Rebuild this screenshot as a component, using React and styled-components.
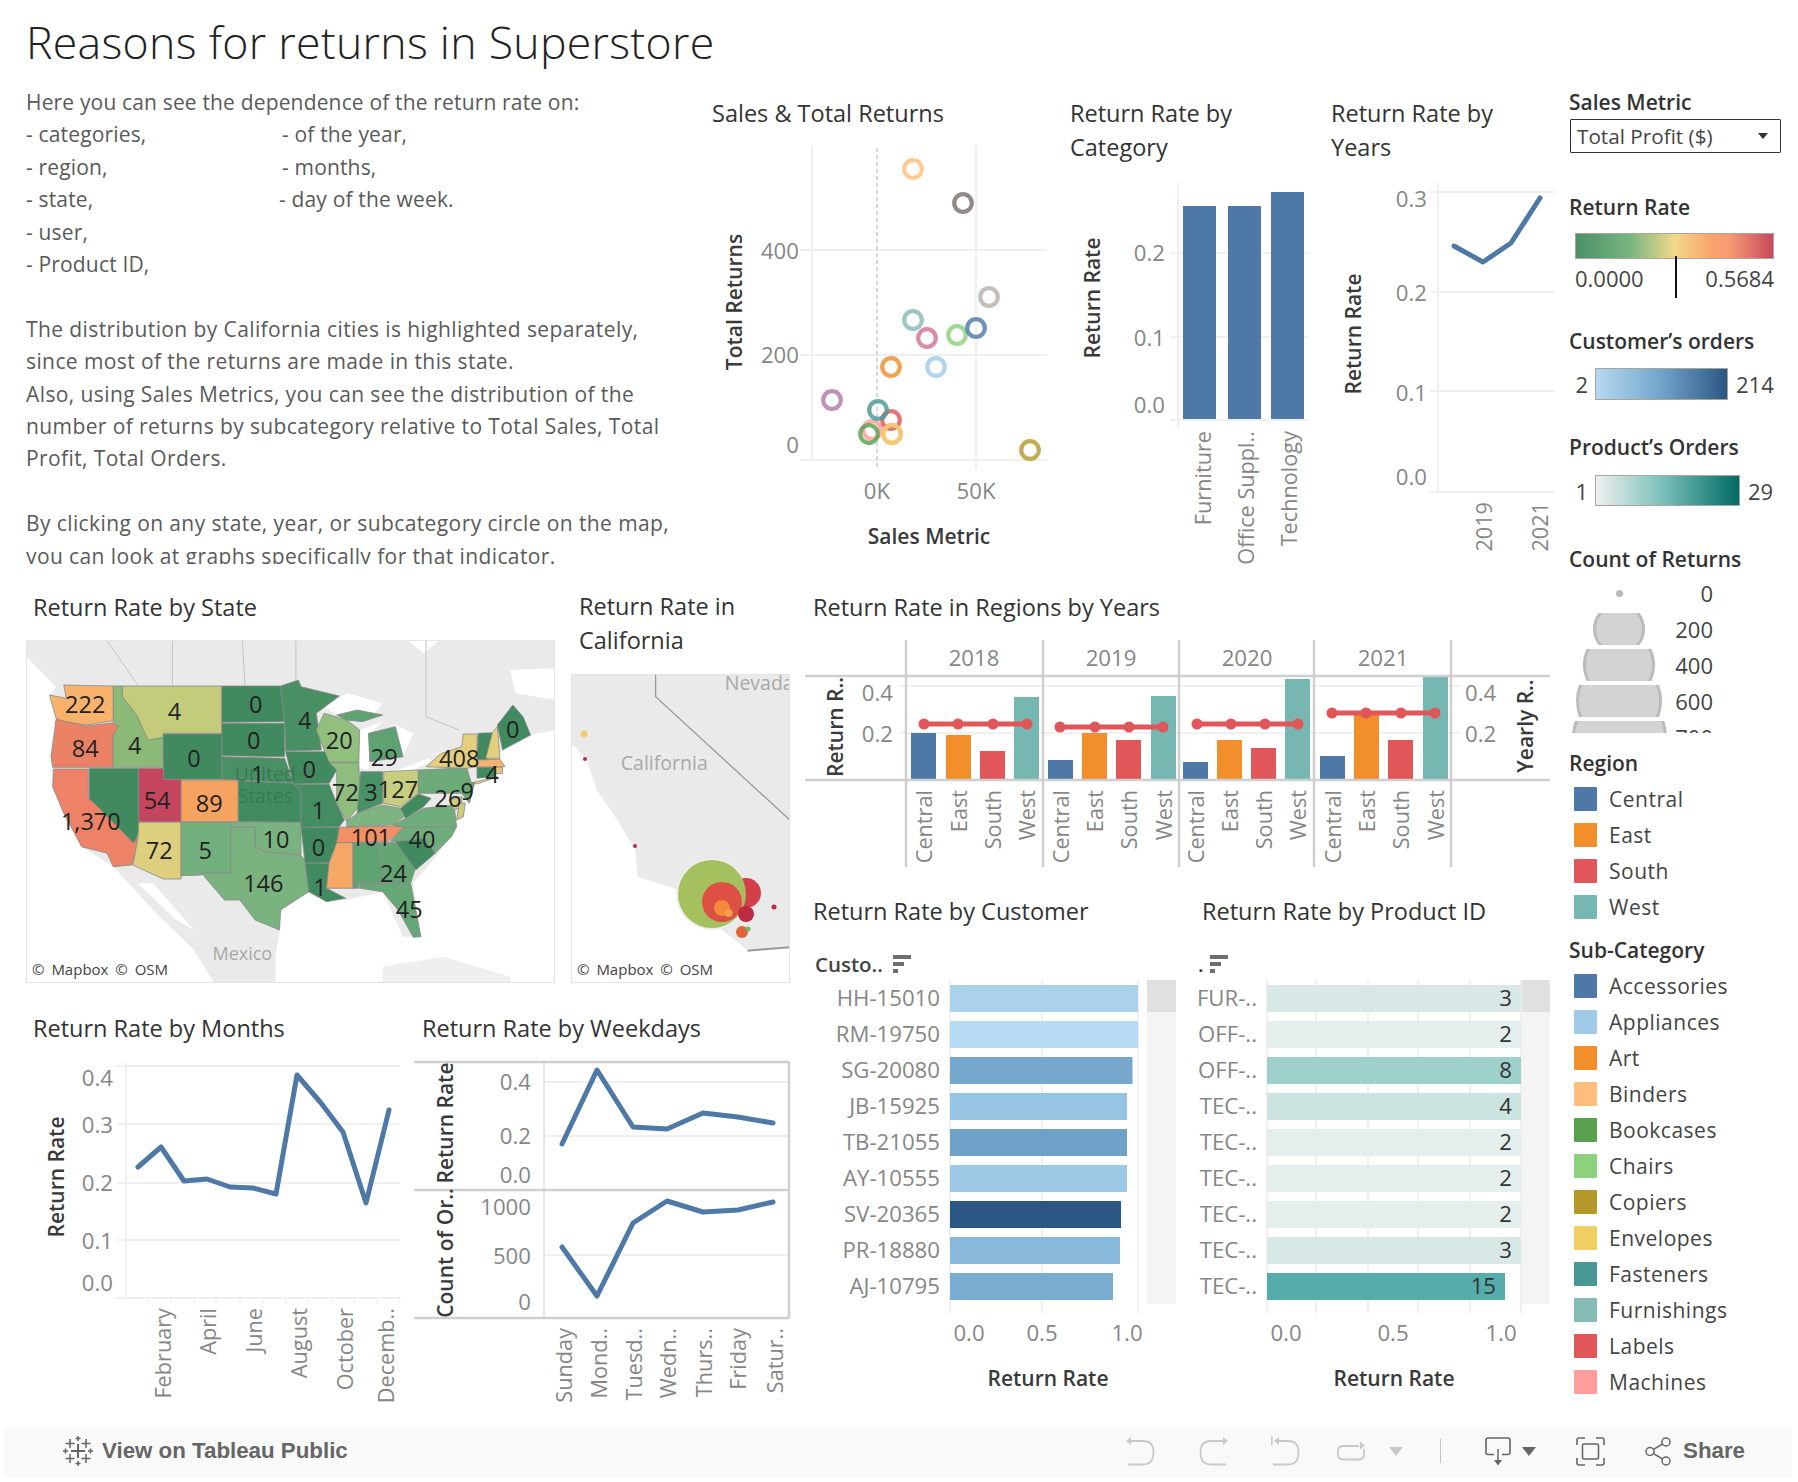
import React from "react";
import styled, { createGlobalStyle } from "styled-components";

const Global = createGlobalStyle`
  html, body { margin: 0; padding: 0; background: #fff; }
  body { font-family: "Open Sans", "Noto Sans", sans-serif; color: #333; }
`;

const Page = styled.div`
  width: 1798px;
  height: 1482px;
  display: flex;
  flex-direction: column;
  overflow: hidden;
`;

const Header = styled.h1`
  margin: 0;
  height: 86px;
  padding: 16px 0 0 26px;
  box-sizing: border-box;
  font-size: 44.6px;
  line-height: 52px;
  font-weight: 300;
  letter-spacing: 0.3px;
  color: #222;
  white-space: nowrap;
`;

const Main = styled.div`
  display: flex;
  height: 1342px;
`;

const Content = styled.div`
  width: 1560px;
  display: flex;
  flex-direction: column;
`;

const TopRow = styled.div`
  display: flex;
  height: 504px;
`;

const BottomRow = styled.div`
  display: flex;
  height: 838px;
`;

const Stack = styled.div`
  width: ${(p) => p.$w}px;
  display: flex;
  flex-direction: column;
`;

const Row = styled.div`
  display: flex;
  height: ${(p) => p.$h}px;
`;

const Intro = styled.div`
  width: 700px;
  height: 478px;
  padding-left: 26px;
  box-sizing: border-box;
  overflow: hidden;
  font-size: 21px;
  line-height: 32.4px;
  letter-spacing: 0.16px;
  color: #5a5a5a;
  white-space: nowrap;
`;

const IntroList = styled.div`
  display: grid;
  grid-template-columns: 256px 1fr;
`;

const Nudged = styled.span`
  margin-left: -3px;
`;

const IntroPara = styled.p`
  margin: 32.4px 0 0;
  letter-spacing: 0.4px;
`;

const Panel = styled.section`
  width: ${(p) => p.$w}px;
  padding-top: ${(p) => p.$top || 0}px;
  display: flex;
  flex-direction: column;
`;

const Title = styled.h2`
  margin: -1px 0 ${(p) => (p.$after || 0) + 1}px;
  padding-left: ${(p) => p.$left}px;
  font-size: 23.5px;
  line-height: 34px;
  font-weight: 400;
  color: #333;
  white-space: nowrap;
`;

const Chart = styled.svg`
  display: block;
  flex-shrink: 0;
  font-family: "Open Sans", "Noto Sans", sans-serif;
`;

const Tick = styled.text.attrs((p) => ({ dy: p.$rot ? 0 : -1.5 }))`
  font-size: ${(p) => (p.$rot ? 21.7 : 22.2)}px;
  fill: #868686;
  text-anchor: ${(p) => p.$anchor || "end"};
  dominant-baseline: central;
`;

const AxisName = styled.text.attrs((p) => ({ dy: p.$rot ? 0 : -1.5 }))`
  font-size: 21px;
  font-weight: 600;
  fill: #3a3a3a;
  text-anchor: middle;
  dominant-baseline: central;
`;

const Grid = styled.line`
  stroke: #f0f0f0;
  stroke-width: 2;
`;

const Pane = styled.line`
  stroke: #cfcfcf;
  stroke-width: 2.5;
`;

const Trend = styled.polyline`
  fill: none;
  stroke: ${(p) => p.$color || "#4e79a7"};
  stroke-width: ${(p) => p.$width || 5};
  stroke-linejoin: round;
  stroke-linecap: round;
`;

const box = (x, y, w, h) => ({ viewBox: `${x} ${y} ${w} ${h}`, width: w, height: h });

const VTick = ({ x, top, children }) => (
  <Tick $rot x={x} y={top} transform={`rotate(-90 ${x} ${top})`}>{children}</Tick>
);

const VName = ({ x, y, children }) => (
  <AxisName $rot x={x} y={y} transform={`rotate(-90 ${x} ${y})`}>{children}</AxisName>
);

const rings = [
  [872, 430, "#ff9d9a"], [891, 420, "#e15759"], [878, 410, "#499894"], [892, 434, "#ff9d9a"],
  [892, 434, "#f1ce63"], [869, 434, "#59a14f"], [913, 169, "#ffbe7d"], [963, 203, "#79706e"],
  [989, 297, "#bab0ac"], [913, 320, "#86bcb6"], [957, 335, "#8cd17d"], [976, 328, "#4e79a7"],
  [927, 338, "#d37295"], [891, 367, "#f28e2b"], [936, 367, "#a0cbe8"], [832, 400, "#b07aa1"],
  [1030, 450, "#b6992d"],
];

const Scatter = () => (
  <Chart {...box(700, 131, 360, 430)}>
    <Grid x1="812" y1="145" x2="812" y2="460" />
    <Grid x1="976" y1="145" x2="976" y2="470" />
    <Grid x1="800" y1="250" x2="1047" y2="250" />
    <Grid x1="800" y1="355" x2="1047" y2="355" />
    <Grid x1="800" y1="460" x2="1047" y2="460" />
    <line x1="877" y1="148" x2="877" y2="470" stroke="#bdbdbd" strokeWidth="1.2" strokeDasharray="4 3" />
    {rings.map(([x, y, c], i) => (
      <circle key={i} cx={x} cy={y} r="8.8" fill="none" stroke={c} strokeWidth="4.2" opacity="0.82" />
    ))}
    <Tick x="799" y="252">400</Tick>
    <Tick x="799" y="356">200</Tick>
    <Tick x="799" y="446">0</Tick>
    <Tick x="877" y="492" $anchor="middle">0K</Tick>
    <Tick x="976" y="492" $anchor="middle">50K</Tick>
    <AxisName x="929" y="537">Sales Metric</AxisName>
    <VName x={734} y={302}>Total Returns</VName>
  </Chart>
);

const CategoryBars = () => (
  <Chart {...box(1060, 165, 260, 415)}>
    <Grid x1="1178" y1="182" x2="1178" y2="428" />
    <Grid x1="1170" y1="253" x2="1309" y2="253" />
    <Grid x1="1170" y1="337" x2="1309" y2="337" />
    <Grid x1="1170" y1="420" x2="1309" y2="420" />
    <rect x="1183" y="206" width="33" height="213" fill="#4e79a7" />
    <rect x="1228" y="206" width="33" height="213" fill="#4e79a7" />
    <rect x="1271" y="192" width="33" height="227" fill="#4e79a7" />
    <Tick x="1165" y="254">0.2</Tick>
    <Tick x="1165" y="339">0.1</Tick>
    <Tick x="1165" y="406">0.0</Tick>
    <VName x={1092} y={298}>Return Rate</VName>
    <VTick x={1202} top={431}>Furniture</VTick>
    <VTick x={1245} top={431}>Office Suppl..</VTick>
    <VTick x={1288} top={431}>Technology</VTick>
  </Chart>
);

const YearLine = () => (
  <Chart {...box(1320, 165, 240, 415)}>
    <Grid x1="1438" y1="182" x2="1438" y2="492" />
    {[192, 292, 391, 492].map((y) => <Grid key={y} x1="1430" y1={y} x2="1555" y2={y} />)}
    <Trend points="1454,246 1483,262 1511,243 1540,198" />
    <Tick x="1427" y="200">0.3</Tick>
    <Tick x="1427" y="294">0.2</Tick>
    <Tick x="1427" y="394">0.1</Tick>
    <Tick x="1427" y="478">0.0</Tick>
    <VName x={1353} y={334}>Return Rate</VName>
    <VTick x={1483} top={502}>2019</VTick>
    <VTick x={1539} top={502}>2021</VTick>
  </Chart>
);

const MapFrame = styled.div`
  position: relative;
  width: ${(p) => p.$w}px;
  height: ${(p) => p.$h}px;
  margin-left: ${(p) => p.$left}px;
  outline: 1px solid #e4e4e4;
  outline-offset: -1px;
  overflow: hidden;
`;

const Credit = styled.span`
  position: absolute;
  left: 3px;
  bottom: 1px;
  padding: 1px 3px;
  background: rgba(255, 255, 255, 0.65);
  font-size: 15px;
  line-height: 24px;
  color: #444;
  word-spacing: 3px;
  white-space: nowrap;
`;

// reference map shapes were traced in zoomed coordinates, convert to page px
const mx = (X) => +(X / 1.96).toFixed(1);
const my = (Y) => +(590 + Y / 3).toFixed(1);
const pts = (s) =>
  s.split(" ").map((p) => {
    const [X, Y] = p.split(",").map(Number);
    return `${mx(X)},${my(Y)}`;
  }).join(" ");

const DARK = "#41895f";

const states = [
  ["125,285 222,288 222,392 170,405 125,395 110,385 97,315 130,325", "#f9b26c"],
  ["110,388 170,408 222,398 232,410 222,435 222,532 103,532 100,500", "#ec8265"],
  ["105,537 173,537 173,625 270,745 265,790 258,825 222,830 210,790 160,770 125,670 103,590", "#ee8266"],
  ["175,535 272,535 272,730 262,760 175,625", DARK],
  ["222,288 240,288 240,320 268,375 290,445 320,440 320,532 222,532 222,435 232,410 222,395", "#8ab978"],
  ["240,288 435,288 435,430 320,430 320,442 290,450 268,375 240,320", "#c4cc7c"],
  ["320,432 435,432 435,568 320,568", DARK],
  ["272,535 320,535 320,568 355,568 355,695 272,695", "#c6455e"],
  ["355,570 467,570 467,695 355,695", "#f6a260"],
  ["272,697 355,697 355,867 320,867 260,825 265,790 270,745", "#ddcf7e"],
  ["355,697 452,697 452,850 395,850 395,855 355,857", "#71b07d"],
  ["435,288 550,288 558,395 435,397", DARK],
  ["435,400 558,400 558,500 435,497", DARK],
  ["435,500 558,505 575,580 467,570 435,568", "#4a9065"],
  ["467,572 575,580 590,600 590,697 467,695", "#428b60"],
  ["452,697 590,697 590,795 520,785 500,770 500,712 452,712", "#7ab37f"],
  ["452,712 500,712 500,770 520,785 590,797 605,820 605,905 550,960 548,1020 500,990 470,930 440,930 395,850 452,850", "#7ab37f"],
  ["550,288 585,270 590,290 665,318 620,370 630,480 560,483 558,395", "#488f64"],
  ["560,485 640,485 660,540 645,580 575,582", DARK],
  ["575,583 645,583 660,640 675,690 665,710 590,712 590,600", "#448c61"],
  ["590,712 665,712 660,760 645,818 598,820", DARK],
  ["598,820 645,820 640,895 678,925 640,935 605,905", "#428b60"],
  ["635,370 680,390 705,420 703,517 645,517 620,420", "#92bf7e"],
  ["645,518 703,518 707,640 680,695 660,640 660,540", "#8ebd7e"],
  ["707,545 750,545 750,640 700,670", "#4b9166"],
  ["722,430 775,410 790,500 725,515", "#5ea272"],
  ["660,375 700,360 750,375 710,395 680,390", "#5ea272"],
  ["752,545 820,540 820,610 785,650 752,640", "#c8ce80"],
  ["680,695 700,670 750,645 785,655 800,670 770,705 680,710", "#7db47f"],
  ["665,712 800,708 760,755 660,758", "#f19163"],
  ["660,758 692,758 692,895 640,895 645,820", "#f6a967"],
  ["692,758 740,758 752,878 703,880 703,895 692,895", "#5fa372"],
  ["740,758 775,758 815,830 805,880 752,878", "#63a674"],
  ["705,880 805,880 825,1040 810,1042 780,960 750,905 705,895", "#66a776"],
  ["765,755 790,712 895,710 885,740 853,790 830,745", "#6fad7c"],
  ["775,755 830,745 853,790 815,840", DARK],
  ["770,705 800,680 830,655 890,645 895,710 790,712", "#6fad7c"],
  ["785,655 820,612 845,625 830,650 795,685", DARK],
  ["820,540 915,533 925,585 905,610 820,610", "#6dab7b"],
  ["835,530 865,490 905,470 908,432 935,432 935,530 915,535", "#e3cf7e"],
  ["925,578 975,560 935,582", "#e3cf7e"],
  ["937,430 965,428 955,510 935,510", DARK],
  ["965,428 975,410 980,505 952,505", "#e2cf80"],
  ["975,405 1005,345 1025,380 1040,435 985,480", DARK],
  ["935,510 980,508 990,530 935,532", "#f5b36e"],
  ["935,532 970,532 970,560 935,565", DARK],
  ["970,532 985,532 985,550 970,552", "#e8c177"],
  ["915,575 930,580 920,640 905,610", "#64a674"],
  ["880,630 905,620 905,650 890,660", "#cfcb7e"],
  ["900,640 912,640 908,680 895,690", "#cfcb7e"],
];

const water = [
  "52,200 110,290 97,315 110,385 100,500 105,600 125,670 160,770 222,830 300,960 380,1080 420,1180 52,1180",
  "550,960 548,1020 540,1100 540,1180 1088,1180 1088,420 1040,435 985,480 935,570 900,680 860,790 810,880 825,1040 790,1040 750,905 680,930 600,910",
  "635,350 680,310 750,340 735,370 660,375",
  "705,420 750,395 725,430 722,540 705,535",
  "770,400 810,430 790,500 775,410",
  "770,545 840,505 850,515 780,555",
  "840,495 905,470 870,490",
  "800,152 860,152 830,190",
  "1000,240 1088,235 1088,330 1010,310",
  "270,880 300,880 380,1020 345,990",
];

const stateLabels = [
  ["222", 167, 343], ["4", 342, 363], ["0", 501, 343], ["4", 597, 390], ["84", 167, 473], ["4", 264, 465],
  ["0", 380, 505], ["0", 497, 450], ["20", 665, 450], ["29", 753, 500], ["0", 1005, 418], ["408", 900, 505],
  ["1", 505, 553], ["0", 606, 537], ["54", 308, 630], ["89", 410, 640], ["72", 677, 607], ["3", 727, 605],
  ["127", 780, 597], ["26", 878, 625], ["9", 916, 602], ["4", 965, 553], ["1,370", 178, 693], ["1", 624, 660],
  ["10", 541, 747], ["72", 312, 780], ["5", 402, 780], ["0", 624, 770], ["101", 727, 742], ["40", 827, 747],
  ["146", 516, 878], ["24", 771, 850], ["1", 627, 892], ["45", 802, 957],
];

const StateText = styled.text`
  font-size: 23.5px;
  fill: #222;
  text-anchor: middle;
  dominant-baseline: central;
`;

const PlaceName = styled.text`
  font-size: ${(p) => p.$size || 19.5}px;
  fill: ${(p) => p.$fill || "#a8a8a8"};
  text-anchor: middle;
  dominant-baseline: central;
`;

const Border = styled.polyline`
  fill: none;
  stroke: ${(p) => p.$color || "#c4c4c4"};
  stroke-width: ${(p) => p.$width || 1};
`;

const StateMap = () => (
  <MapFrame $w={529} $h={343} $left={26}>
    <Chart {...box(26, 640, 529, 343)}>
      <rect x="26" y="640" width="529" height="343" fill="#eaeaea" />
      {water.map((s, i) => <polygon key={i} points={pts(s)} fill="#fff" />)}
      <polygon points={pts("750,1130 870,1100 1000,1160 1000,1180 750,1180")} fill="#efefef" />
      <Border points={pts("338,152 338,285")} />
      <Border points={pts("475,152 480,285")} />
      <Border points={pts("580,152 580,270")} />
      <Border points={pts("835,152 835,380 900,420")} />
      <Border points={pts("210,152 270,285")} />
      {states.map(([s, c], i) => (
        <polygon key={i} points={pts(s)} fill={c} stroke="#888" strokeWidth="0.8" />
      ))}
      <PlaceName x={mx(520)} y={my(550)} $fill="#357a52">United</PlaceName>
      <PlaceName x={mx(520)} y={my(615)} $fill="#357a52">States</PlaceName>
      <PlaceName x={mx(475)} y={my(1088)} $size={18}>Mexico</PlaceName>
      {stateLabels.map(([t, X, Y], i) => <StateText key={i} x={mx(X)} y={my(Y)}>{t}</StateText>)}
    </Chart>
    <Credit>© Mapbox  © OSM</Credit>
  </MapFrame>
);

const cities = [
  [712, 894, 36, "#ededed"], [746, 893, 15, "#d43f47"], [712, 894, 34, "#a5c05f"], [722, 902, 20, "#de5043"],
  [746, 914, 8, "#be2a44"], [722, 908, 8, "#f58a3c"], [728.6, 913, 4, "#f9a04a"], [742, 932, 6, "#e5633b"],
  [748, 929, 2.5, "#7ab85f"], [584, 734, 3.5, "#f1ce63"], [585, 759, 2, "#c0284a"], [635, 846, 2, "#c0284a"],
  [774, 907, 2.5, "#c0284a"],
];

const CaliforniaMap = () => (
  <MapFrame $w={219} $h={309} $left={11}>
    <Chart {...box(571, 674, 219, 309)}>
      <rect x="571" y="674" width="219" height="309" fill="#eaeaea" />
      <polygon points={pts("1120,460 1150,510 1170,600 1210,690 1245,780 1250,860 1330,900 1400,1000 1465,1080 1548,1072 1548,1180 1120,1180")} fill="#fff" />
      <Border points={pts("1285,252 1285,320 1548,690")} $color="#9a9a9a" $width={1.3} />
      <Border points={pts("1465,1082 1548,1072")} $color="#999" $width={2} />
      <PlaceName x={mx(1488)} y={my(277)}>Nevada</PlaceName>
      <PlaceName x={mx(1302)} y={my(518)}>California</PlaceName>
      {cities.map(([x, y, r, c], i) => <circle key={i} cx={x} cy={y} r={r} fill={c} />)}
    </Chart>
    <Credit>© Mapbox  © OSM</Credit>
  </MapFrame>
);

const years = [
  { label: "2018", cx: 974, line: 724, bars: [[911, 733], [946, 735], [980, 751], [1014, 697]], dots: [924, 958, 993, 1027] },
  { label: "2019", cx: 1111, line: 727, bars: [[1048, 760], [1082, 733], [1116, 740], [1151, 696]], dots: [1060, 1095, 1129, 1163] },
  { label: "2020", cx: 1247, line: 724, bars: [[1183, 762], [1217, 740], [1251, 748], [1285, 679]], dots: [1197, 1231, 1265, 1298] },
  { label: "2021", cx: 1383, line: 713, bars: [[1320, 756], [1354, 713], [1388, 740], [1423, 677]], dots: [1332, 1366, 1401, 1435] },
];

const regions = [
  ["Central", "#4e79a7"], ["East", "#f28e2b"], ["South", "#e15759"], ["West", "#76b7b2"],
];

const RegionYears = () => (
  <Chart {...box(800, 625, 760, 260)}>
    <Grid x1="900" y1="686" x2="1460" y2="686" />
    <Grid x1="900" y1="733" x2="1460" y2="733" />
    {years.map((yr) => (
      <g key={yr.label}>
        {yr.bars.map(([x, top], i) => (
          <rect key={i} x={x} y={top} width="25" height={779 - top} fill={regions[i][1]} />
        ))}
        <Trend points={yr.dots.map((x) => `${x},${yr.line}`).join(" ")} $color="#e15759" $width={5} />
        {yr.dots.map((x) => <circle key={x} cx={x} cy={yr.line} r="5.5" fill="#e15759" />)}
        <Tick x={yr.cx} y="659" $anchor="middle">{yr.label}</Tick>
        {yr.dots.map((_, i) => (
          <VTick key={i} x={yr.bars[i][0] + 12.5} top={790}>{regions[i][0]}</VTick>
        ))}
      </g>
    ))}
    {[906, 1043, 1179, 1314, 1451].map((x) => <Pane key={x} x1={x} y1="640" x2={x} y2="867" />)}
    <Pane x1="805" y1="676" x2="1550" y2="676" />
    <Pane x1="805" y1="780" x2="1550" y2="780" />
    <Tick x="893" y="694">0.4</Tick>
    <Tick x="893" y="735">0.2</Tick>
    <Tick x="1465" y="694" $anchor="start">0.4</Tick>
    <Tick x="1465" y="735" $anchor="start">0.2</Tick>
    <VName x={835} y={727}>Return R..</VName>
    <VName x={1525} y={726}>Yearly R..</VName>
  </Chart>
);

const SortIcon = ({ x, y }) => (
  <g fill="#6e6e6e">
    <rect x={x} y={y} width="18" height="4" />
    <rect x={x} y={y + 7} width="11" height="4" />
    <rect x={x} y={y + 14} width="5" height="4" />
  </g>
);

const customers = [
  ["HH-15010", 1138, "#aad2ea"], ["RM-19750", 1138, "#b6dbf2"], ["SG-20080", 1132.5, "#76a8cd"],
  ["JB-15925", 1127, "#98c4e3"], ["TB-21055", 1127, "#70a2c9"], ["AY-10555", 1127, "#9dc8e5"],
  ["SV-20365", 1121, "#2a5783"], ["PR-18880", 1120, "#8abadb"], ["AJ-10795", 1113, "#7aacd0"],
];

const products = [
  ["FUR-..", 1521, "#d8e8e7", 3], ["OFF-..", 1521, "#e4eeec", 2], ["OFF-..", 1521, "#9ed0cc", 8],
  ["TEC-..", 1521, "#cbe4e2", 4], ["TEC-..", 1521, "#e4eeec", 2], ["TEC-..", 1521, "#e4eeec", 2],
  ["TEC-..", 1521, "#e4eeec", 2], ["TEC-..", 1521, "#d8e8e7", 3], ["TEC-..", 1505, "#55acaa", 15],
];

const HeadLabel = styled.text`
  font-size: 20.5px;
  font-weight: 600;
  fill: #444;
  dominant-baseline: central;
`;

const Count = styled.text`
  font-size: 22.2px;
  fill: #333;
  text-anchor: end;
  dominant-baseline: central;
`;

const Scroll = ({ x }) => (
  <>
    <rect x={x} y="980" width="29" height="324" fill="#f4f4f4" />
    <rect x={x} y="980" width="29" height="32" fill="#e0e0e0" />
  </>
);

const CustomerBars = () => (
  <Chart {...box(800, 929, 390, 499)}>
    <Scroll x={1147} />
    {[950, 1042, 1138].map((x) => <Grid key={x} x1={x} y1="980" x2={x} y2="1313" />)}
    {customers.map(([id, end, c], i) => (
      <g key={id}>
        <rect x="950" y={985 + i * 36} width={end - 950} height="27" fill={c} />
        <Tick x="940" y={998.5 + i * 36}>{id}</Tick>
      </g>
    ))}
    <HeadLabel x="815" y="964">Custo..</HeadLabel>
    <SortIcon x={893} y={955} />
    <Tick x="969" y="1334" $anchor="middle">0.0</Tick>
    <Tick x="1042" y="1334" $anchor="middle">0.5</Tick>
    <Tick x="1127" y="1334" $anchor="middle">1.0</Tick>
    <AxisName x="1048" y="1379">Return Rate</AxisName>
  </Chart>
);

const ProductBars = () => (
  <Chart {...box(1190, 929, 370, 499)}>
    <Scroll x={1521} />
    {[1267, 1316, 1368, 1418, 1470, 1521].map((x) => <Grid key={x} x1={x} y1="980" x2={x} y2="1313" />)}
    {products.map(([id, end, c, n], i) => (
      <g key={i}>
        <rect x="1267" y={985 + i * 36} width={end - 1267} height="27" fill={c} />
        <Tick x="1257" y={998.5 + i * 36}>{id}</Tick>
        <Count x={end - 9} y={997 + i * 36}>{n}</Count>
      </g>
    ))}
    <HeadLabel x="1198" y="964">.</HeadLabel>
    <SortIcon x={1210} y={955} />
    <Tick x="1286" y="1334" $anchor="middle">0.0</Tick>
    <Tick x="1393" y="1334" $anchor="middle">0.5</Tick>
    <Tick x="1501" y="1334" $anchor="middle">1.0</Tick>
    <AxisName x="1394" y="1379">Return Rate</AxisName>
  </Chart>
);

const monthLine = "138,1167 161,1147 184,1181 207,1179 230,1187 253,1188 276,1194 297,1075 321,1103 343,1132 366,1203 389,1110";

const Months = () => (
  <Chart {...box(0, 1046, 414, 382)}>
    <Grid x1="126" y1="1062" x2="126" y2="1298" />
    {[1066, 1124, 1183, 1240, 1298].map((y) => <Grid key={y} x1="117" y1={y} x2="400" y2={y} />)}
    {[148, 171, 194, 216, 240, 263, 286, 308, 332, 354, 377, 400].map((x) => (
      <line key={x} x1={x} y1="1299" x2={x} y2="1304" stroke="#ececec" />
    ))}
    <Trend points={monthLine} />
    <Tick x="113" y="1079">0.4</Tick>
    <Tick x="113" y="1126">0.3</Tick>
    <Tick x="113" y="1184">0.2</Tick>
    <Tick x="113" y="1242">0.1</Tick>
    <Tick x="113" y="1284">0.0</Tick>
    <VName x={56} y={1177}>Return Rate</VName>
    {[["February", 162], ["April", 207], ["June", 253], ["August", 298], ["October", 344], ["Decemb..", 385]].map(([t, x]) => (
      <VTick key={t} x={x} top={1308}>{t}</VTick>
    ))}
  </Chart>
);

const Weekdays = () => (
  <Chart {...box(414, 1046, 386, 382)}>
    <Grid x1="544" y1="1082" x2="789" y2="1082" />
    <Grid x1="544" y1="1136" x2="789" y2="1136" />
    <Grid x1="544" y1="1255" x2="789" y2="1255" />
    <Trend points="562,1144 597,1070 633,1127 667,1129 703,1113 738,1117 773,1123" />
    <Trend points="562,1247 597,1296 633,1223 667,1201 703,1212 738,1210 773,1202" />
    <Pane x1="414" y1="1062" x2="789" y2="1062" />
    <Pane x1="414" y1="1190" x2="789" y2="1190" />
    <Pane x1="414" y1="1318" x2="789" y2="1318" />
    <Pane x1="789" y1="1062" x2="789" y2="1318" />
    <line x1="544" y1="1062" x2="544" y2="1318" stroke="#cfcfcf" />
    <Tick x="531" y="1083">0.4</Tick>
    <Tick x="531" y="1137">0.2</Tick>
    <Tick x="531" y="1176">0.0</Tick>
    <Tick x="531" y="1208">1000</Tick>
    <Tick x="531" y="1257">500</Tick>
    <Tick x="531" y="1303">0</Tick>
    <VName x={445} y={1123}>Return Rate</VName>
    <VName x={445} y={1253}>Count of Or..</VName>
    {[["Sunday", 563], ["Mond..", 598], ["Tuesd..", 633], ["Wedn..", 667], ["Thurs..", 703], ["Friday", 737], ["Satur..", 774]].map(([t, x]) => (
      <VTick key={t} x={x} top={1328}>{t}</VTick>
    ))}
  </Chart>
);

/* sidebar legends */
const Sidebar = styled.aside`
  width: 238px;
  padding: 4px 0 0 9px;
  box-sizing: border-box;
  display: flex;
  flex-direction: column;
`;

const LegendTitle = styled.h3`
  margin: ${(p) => p.$top || 0}px 0 ${(p) => p.$after || 0}px;
  font-size: 21px;
  line-height: 24px;
  font-weight: 600;
  color: #333;
  white-space: nowrap;
`;

const Select = styled.div`
  width: 211px;
  height: 34px;
  margin: 5px 0 0 1px;
  padding: 0 12px 0 6px;
  box-sizing: border-box;
  border: 1px solid #333;
  border-radius: 1px;
  display: flex;
  align-items: center;
  justify-content: space-between;
  font-size: 20.7px;
  color: #444;
`;

const Caret = styled.span`
  width: 0;
  height: 0;
  border: 5.5px solid transparent;
  border-top: 6px solid #333;
  border-bottom: 0;
`;

const Gradient = styled.div`
  width: ${(p) => p.$w}px;
  height: ${(p) => p.$h}px;
  box-sizing: border-box;
  border: 1px solid #a9a59c;
  background: linear-gradient(90deg, ${(p) => p.$colors});
`;

const RateScale = styled.div`
  position: relative;
  width: 199px;
  margin-left: 6px;
`;

const RateValues = styled.div`
  display: flex;
  justify-content: space-between;
  margin: 7px 0 1px;
  font-size: 22px;
  line-height: 24px;
  color: #444;
`;

const Needle = styled.span`
  position: absolute;
  left: 100px;
  top: 23px;
  width: 2px;
  height: 42px;
  background: #111;
`;

const RangeRow = styled.div`
  display: flex;
  align-items: center;
  font-size: 22px;
  line-height: 28px;
  color: #444;
`;

const RangeMin = styled.span`
  width: 19px;
  margin-right: 7px;
  text-align: right;
`;

const RangeMax = styled.span`
  width: 38px;
  margin-left: 8px;
`;

const SizeRows = styled.div`
  height: 158px;
  overflow: hidden;
`;

const SizeRow = styled.div`
  height: 36px;
  width: 144px;
  display: flex;
  align-items: center;
  font-size: 22px;
  color: #444;
`;

const SizeCell = styled.div`
  width: 100px;
  height: 32px;
  overflow: hidden;
  display: flex;
  align-items: center;
  justify-content: center;
`;

const Bubble = styled.span`
  flex-shrink: 0;
  width: ${(p) => p.$d}px;
  height: ${(p) => p.$d}px;
  box-sizing: border-box;
  border-radius: 50%;
  background: ${(p) => (p.$d > 10 ? "#d3d3d3" : "#bbb")};
  border: ${(p) => (p.$d > 10 ? "3px solid #bbb" : "none")};
`;

const SizeLabel = styled.span`
  flex: 1;
  text-align: right;
`;

const LegendList = styled.ul`
  list-style: none;
  margin: 6px 0 0;
  padding: 0 0 0 5px;
`;

const LegendItem = styled.li`
  height: 36px;
  display: flex;
  align-items: center;
  gap: 12px;
  font-size: 21px;
  letter-spacing: 0.5px;
  color: #444;
`;

const Swatch = styled.span`
  width: 23px;
  height: 24px;
  border-radius: 1px;
  background: ${(p) => p.$color};
`;

const subCategories = [
  ["Accessories", "#4e79a7"], ["Appliances", "#a0cbe8"], ["Art", "#f28e2b"], ["Binders", "#ffbe7d"],
  ["Bookcases", "#59a14f"], ["Chairs", "#8cd17d"], ["Copiers", "#b6992d"], ["Envelopes", "#f1ce63"],
  ["Fasteners", "#499894"], ["Furnishings", "#86bcb6"], ["Labels", "#e15759"], ["Machines", "#ff9d9a"],
];

const Legends = () => (
  <Sidebar>
    <LegendTitle>Sales Metric</LegendTitle>
    <Select>Total Profit ($)<Caret /></Select>
    <LegendTitle $top={42} $after={14}>Return Rate</LegendTitle>
    <RateScale>
      <Gradient $w={199} $h={26} $colors="#4a9067, #7ab681 28%, #f2d98a 50%, #f9a66f 68%, #f79a73 78%, #c7495e" />
      <RateValues><span>0.0000</span><span>0.5684</span></RateValues>
      <Needle />
    </RateScale>
    <LegendTitle $top={38} $after={15}>Customer’s orders</LegendTitle>
    <RangeRow>
      <RangeMin>2</RangeMin>
      <Gradient $w={133} $h={32} $colors="#b5d9f0, #79abd0 45%, #2a5783" />
      <RangeMax>214</RangeMax>
    </RangeRow>
    <LegendTitle $top={35} $after={16}>Product’s Orders</LegendTitle>
    <RangeRow>
      <RangeMin>1</RangeMin>
      <Gradient $w={145} $h={31} $colors="#eeefee, #7fc1bb 45%, #006b66" />
      <RangeMax>29</RangeMax>
    </RangeRow>
    <LegendTitle $top={41} $after={4}>Count of Returns</LegendTitle>
    <SizeRows>
      {[[7, 0], [52, 200], [72, 400], [86, 600], [95, 700]].map(([d, v]) => (
        <SizeRow key={v}>
          <SizeCell><Bubble $d={d} /></SizeCell>
          <SizeLabel>{v}</SizeLabel>
        </SizeRow>
      ))}
    </SizeRows>
    <LegendTitle $top={18}>Region</LegendTitle>
    <LegendList>
      {regions.map(([t, c]) => <LegendItem key={t}><Swatch $color={c} />{t}</LegendItem>)}
    </LegendList>
    <LegendTitle $top={13}>Sub-Category</LegendTitle>
    <LegendList>
      {subCategories.map(([t, c]) => <LegendItem key={t}><Swatch $color={c} />{t}</LegendItem>)}
    </LegendList>
  </Sidebar>
);

/* tableau public footer */
const Toolbar = styled.footer`
  margin: 0 6px 0 4px;
  height: 49px;
  padding-bottom: 3px;
  box-sizing: border-box;
  background: #f9f9f9;
  display: flex;
  align-items: center;
  justify-content: space-between;
  font-family: "Liberation Sans", Arial, sans-serif;
`;

const ToolLeft = styled.div`
  display: flex;
  align-items: center;
  gap: 9px;
  padding-left: 59px;
  font-size: 22.3px;
  font-weight: 700;
  color: #666;
`;

const ToolRight = styled.div`
  display: flex;
  align-items: center;
  padding-right: 47px;
`;

const ToolIcon = styled.svg`
  display: block;
  margin-left: ${(p) => p.$gap || 0}px;
`;

const Caretdown = styled.span`
  width: 0;
  height: 0;
  margin-left: ${(p) => p.$gap}px;
  border-left: 7px solid transparent;
  border-right: 7px solid transparent;
  border-top: 9px solid ${(p) => p.$color};
`;

const Sep = styled.span`
  width: 1px;
  height: 24px;
  margin-left: ${(p) => p.$gap}px;
  background: #c4c4c4;
`;

const ShareText = styled.span`
  margin-left: 12px;
  font-size: 22.3px;
  font-weight: 700;
  color: #666;
`;

const Plus = ({ x, y, s, w = 1.5 }) => (
  <path d={`M${x - s} ${y}H${x + s}M${x} ${y - s}V${y + s}`} stroke="#666" strokeWidth={w} fill="none" />
);

const TableauMark = () => (
  <ToolIcon width="30" height="30" viewBox="0 0 30 30">
    <Plus x={15} y={15} s={7} w={2} />
    <Plus x={7} y={7.5} s={4.5} />
    <Plus x={23} y={7.5} s={4.5} />
    <Plus x={7} y={22.5} s={4.5} />
    <Plus x={23} y={22.5} s={4.5} />
    <Plus x={15} y={2.5} s={2.5} />
    <Plus x={15} y={27.5} s={2.5} />
    <Plus x={2.5} y={15} s={2.5} />
    <Plus x={27.5} y={15} s={2.5} />
  </ToolIcon>
);

const Hook = ({ gap, flip, bar }) => (
  <ToolIcon $gap={gap} width="29" height="30" viewBox="0 0 29 30">
    <g transform={flip ? "translate(29 0) scale(-1 1)" : undefined} fill="none" stroke="#c9c9c9" strokeWidth="1.8">
      <path d="M5 5H17Q27.5 5 27.5 16.5Q27.5 28.5 17 28.5H2" />
      <path d={bar ? "M3 5L8 1V9Z" : "M0 5L5 1V9Z"} fill="#c9c9c9" stroke="none" />
      {bar && <path d="M0.8 0.5V9" />}
    </g>
  </ToolIcon>
);

const Replay = () => (
  <ToolIcon $gap={37} width="28" height="20" viewBox="0 0 28 20">
    <path d="M22 5H6Q1 5 1 10V13Q1 18.5 6 18.5H22Q27 18.5 27 13V8" fill="none" stroke="#c9c9c9" strokeWidth="1.8" />
    <path d="M28 4.5L23 0.5V8.5Z" fill="#c9c9c9" />
  </ToolIcon>
);

const Download = () => (
  <ToolIcon $gap={44} width="26" height="29" viewBox="0 0 26 29">
    <path d="M9 17.5H3Q1 17.5 1 15.5V3Q1 1 3 1H23Q25 1 25 3V15.5Q25 17.5 23 17.5H17" fill="none" stroke="#666" strokeWidth="1.6" />
    <path d="M13 12V24" stroke="#666" strokeWidth="1.4" />
    <path d="M9 23H17L13 28.5Z" fill="#666" />
  </ToolIcon>
);

const FullScreen = () => (
  <ToolIcon $gap={40} width="29" height="29" viewBox="0 0 29 29">
    <path d="M1 8V3Q1 1 3 1H9M20 1H26Q28 1 28 3V8M28 21V26Q28 28 26 28H20M9 28H3Q1 28 1 26V21" fill="none" stroke="#666" strokeWidth="1.6" />
    <rect x="6.5" y="7" width="16" height="15" rx="1.5" fill="none" stroke="#666" strokeWidth="1.6" />
  </ToolIcon>
);

const ShareIcon = () => (
  <ToolIcon $gap={40} width="26" height="29" viewBox="0 0 26 29">
    <g fill="none" stroke="#666" strokeWidth="1.5">
      <circle cx="21" cy="5" r="4" />
      <circle cx="21" cy="24" r="4" />
      <circle cx="5" cy="14.5" r="4" />
      <path d="M8.5 12.4L17.6 7M8.5 16.6L17.6 22" />
    </g>
  </ToolIcon>
);

const App = () => (
  <Page>
    <Global />
    <Header>Reasons for returns in Superstore</Header>
    <Main>
      <Content>
        <TopRow>
          <Intro>
            <div>Here you can see the dependence of the return rate on:</div>
            <IntroList>
              <span>- categories,</span><span>- of the year,</span>
              <span>- region,</span><span>- months,</span>
              <span>- state,</span><Nudged>- day of the week.</Nudged>
              <span>- user,</span><span />
              <span>- Product ID,</span><span />
            </IntroList>
            <IntroPara>
              The distribution by California cities is highlighted separately,<br />
              since most of the returns are made in this state.<br />
              Also, using Sales Metrics, you can see the distribution of the<br />
              number of returns by subcategory relative to Total Sales, Total<br />
              Profit, Total Orders.
            </IntroPara>
            <IntroPara>
              By clicking on any state, year, or subcategory circle on the map,<br />
              you can look at graphs specifically for that indicator.
            </IntroPara>
          </Intro>
          <Panel $w={360} $top={11}>
            <Title $left={12}>Sales &amp; Total Returns</Title>
            <Scatter />
          </Panel>
          <Panel $w={260} $top={11}>
            <Title $left={10}>Return Rate by<br />Category</Title>
            <CategoryBars />
          </Panel>
          <Panel $w={240} $top={11}>
            <Title $left={11}>Return Rate by<br />Years</Title>
            <YearLine />
          </Panel>
        </TopRow>
        <BottomRow>
          <Stack $w={800}>
            <Row $h={410}>
              <Panel $w={560} $top={1}>
                <Title $left={33} $after={15}>Return Rate by State</Title>
                <StateMap />
              </Panel>
              <Panel $w={240}>
                <Title $left={19} $after={16}>Return Rate in<br />California</Title>
                <CaliforniaMap />
              </Panel>
            </Row>
            <Row $h={428}>
              <Panel $w={414} $top={12}>
                <Title $left={33}>Return Rate by Months</Title>
                <Months />
              </Panel>
              <Panel $w={386} $top={12}>
                <Title $left={8}>Return Rate by Weekdays</Title>
                <Weekdays />
              </Panel>
            </Row>
          </Stack>
          <Stack $w={760}>
            <Panel $w={760} $top={1}>
              <Title $left={13}>Return Rate in Regions by Years</Title>
              <RegionYears />
            </Panel>
            <Row $h={543}>
              <Panel $w={390} $top={10}>
                <Title $left={13}>Return Rate by Customer</Title>
                <CustomerBars />
              </Panel>
              <Panel $w={370} $top={10}>
                <Title $left={12}>Return Rate by Product ID</Title>
                <ProductBars />
              </Panel>
            </Row>
          </Stack>
        </BottomRow>
      </Content>
      <Legends />
    </Main>
    <Toolbar>
      <ToolLeft><TableauMark />View on Tableau Public</ToolLeft>
      <ToolRight>
        <Hook />
        <Hook gap={44} flip />
        <Hook gap={43} bar />
        <Replay />
        <Caretdown $gap={24} $color="#c9c9c9" />
        <Sep $gap={37} />
        <Download />
        <Caretdown $gap={11} $color="#666" />
        <FullScreen />
        <ShareIcon />
        <ShareText>Share</ShareText>
      </ToolRight>
    </Toolbar>
  </Page>
);

export default App;
